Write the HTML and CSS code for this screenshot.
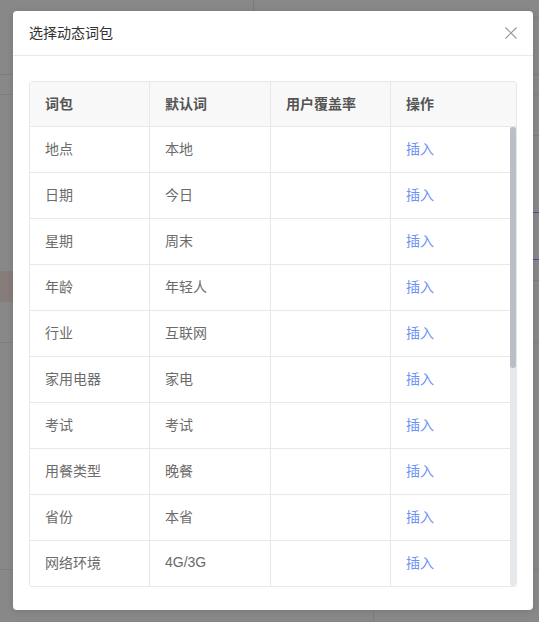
FILE: index.html
```html
<!DOCTYPE html>
<html lang="zh-CN">
<head>
<meta charset="utf-8">
<title>选择动态词包</title>
<link rel="stylesheet" href="styles.css">
</head>
<body>
<div class="dialog">
  <div class="dialog-header">
    <span class="dialog-title">选择动态词包</span>
    <svg class="close" width="12" height="12" viewBox="0 0 12 12"><path d="M0.5 0.5 L11.5 11.5 M11.5 0.5 L0.5 11.5" stroke="#9a9a9a" stroke-width="1.2" fill="none"/></svg>
  </div>
  <div class="dialog-body">
    <div class="table">
      <div class="thead">
        <div class="th">词包</div>
        <div class="th">默认词</div>
        <div class="th">用户覆盖率</div>
        <div class="th last">操作</div>
      </div>
      <div class="tbody">
        <div class="rows">
          <div class="tr"><div class="td">地点</div><div class="td">本地</div><div class="td"></div><div class="td"><a class="link">插入</a></div></div>
          <div class="tr"><div class="td">日期</div><div class="td">今日</div><div class="td"></div><div class="td"><a class="link">插入</a></div></div>
          <div class="tr"><div class="td">星期</div><div class="td">周末</div><div class="td"></div><div class="td"><a class="link">插入</a></div></div>
          <div class="tr"><div class="td">年龄</div><div class="td">年轻人</div><div class="td"></div><div class="td"><a class="link">插入</a></div></div>
          <div class="tr"><div class="td">行业</div><div class="td">互联网</div><div class="td"></div><div class="td"><a class="link">插入</a></div></div>
          <div class="tr"><div class="td">家用电器</div><div class="td">家电</div><div class="td"></div><div class="td"><a class="link">插入</a></div></div>
          <div class="tr"><div class="td">考试</div><div class="td">考试</div><div class="td"></div><div class="td"><a class="link">插入</a></div></div>
          <div class="tr"><div class="td">用餐类型</div><div class="td">晚餐</div><div class="td"></div><div class="td"><a class="link">插入</a></div></div>
          <div class="tr"><div class="td">省份</div><div class="td">本省</div><div class="td"></div><div class="td"><a class="link">插入</a></div></div>
          <div class="tr last-row"><div class="td">网络环境</div><div class="td">4G/3G</div><div class="td"></div><div class="td"><a class="link">插入</a></div></div>
        </div>
        <div class="scrollbar"><div class="thumb"></div></div>
      </div>
    </div>
  </div>
</div>
</body>
</html>
```

FILE: styles.css
```css
html, body {
  margin: 0;
  height: 100%;
}
body {
  padding: 11px 0 0 13px;
  box-sizing: border-box;
  overflow: hidden;
  font-family: "Liberation Sans", "Noto Sans CJK SC", sans-serif;
  background-color: #888888;
  background-repeat: no-repeat;
  background-image:
    linear-gradient(#7c7c7c, #7c7c7c),
    linear-gradient(#7c7c7c, #7c7c7c),
    linear-gradient(#7c7c7c, #7c7c7c),
    linear-gradient(#7c7c7c, #7c7c7c),
    linear-gradient(#867c7a, #867c7a),
    linear-gradient(#7c7c7c, #7c7c7c),
    linear-gradient(#7c7c7c, #7c7c7c),
    linear-gradient(#3d5a99, #3d5a99),
    linear-gradient(#3d5a99, #3d5a99),
    linear-gradient(#7c7c7c, #7c7c7c),
    linear-gradient(#7c7c7c, #7c7c7c),
    linear-gradient(#7c7c7c, #7c7c7c);
  background-size:
    100% 1px,
    100% 1px,
    100% 1px,
    100% 1px,
    14px 31px,
    1px 11px,
    1px 12px,
    6px 1px,
    6px 1px,
    6px 1px,
    6px 1px,
    6px 1px;
  background-position:
    0 74px,
    0 94px,
    0 342px,
    0 569px,
    0 271px,
    253px 0,
    373px 610px,
    533px 212px,
    533px 259px,
    533px 17px,
    533px 135px,
    533px 280px;
}

.dialog {
  width: 520px;
  background: #ffffff;
  border-radius: 4px;
  box-shadow: 0 1px 6px rgba(0, 0, 0, 0.12);
  display: flex;
  flex-direction: column;
}

.dialog-header {
  height: 44px;
  border-bottom: 1px solid #e8e8e8;
  padding: 0 16px 0 16px;
  display: flex;
  align-items: center;
  justify-content: space-between;
}
.dialog-title {
  font-size: 14px;
  color: #333333;
  padding-bottom: 2px;
}
.close {
  display: block;
  margin-bottom: 1px;
}

.dialog-body {
  padding: 25px 16px 23px 16px;
}

.table {
  border: 1px solid #e8e8e8;
  border-radius: 3px;
  overflow: hidden;
  font-size: 14px;
}

.thead {
  display: grid;
  grid-template-columns: 120px 121px 120px 1fr;
  height: 45px;
  background: #f8f8f8;
  border-bottom: 1px solid #e8e8e8;
  box-sizing: border-box;
}
.th {
  display: flex;
  align-items: center;
  padding: 0 0 3px 15px;
  border-right: 1px solid #e8e8e8;
  color: #555555;
  font-weight: 600;
}
.th.last {
  border-right: none;
}

.tbody {
  height: 459px;
  display: flex;
}
.rows {
  flex: 1;
  min-width: 0;
}
.scrollbar {
  width: 6px;
  background: #e5e8eb;
  border-radius: 0 0 3px 3px;
}
.thumb {
  height: 241px;
  background: #b9bfc5;
  border-radius: 3px;
}

.tr {
  display: grid;
  grid-template-columns: 120px 121px 120px 1fr;
  height: 46px;
  border-bottom: 1px solid #e8e8e8;
  box-sizing: border-box;
}
.tr.last-row {
  height: 45px;
  border-bottom: none;
}
.td {
  display: flex;
  align-items: center;
  padding: 0 0 3px 15px;
  border-right: 1px solid #e8e8e8;
  color: #6b6b6b;
}
.td:last-child {
  border-right: none;
}
.link {
  color: #6d92f5;
  cursor: pointer;
}
```
